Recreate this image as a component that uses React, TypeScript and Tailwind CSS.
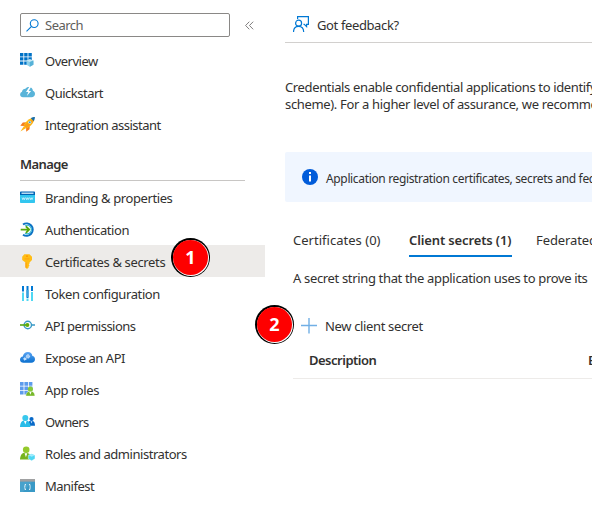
import React from "react";

const icon = "block h-[15px] w-[15px] shrink-0";

const OverviewIcon = () => (
  <svg className={icon} viewBox="0 0 15 15">
    <path fill="#0072c6" d="M0 0h3.400v3.400H0zM4.200 0h3.400v3.400H4.200zM8.400 0h3.400v3.400H8.400zM0 4.200h3.400v3.400H0zM4.200 4.200h3.400v3.400H4.200zM8.400 4.200h3.400v3.400H8.400zM0 8.400h3.400v3.400H0zM4.200 8.400h3.400v3.400H4.200z" />
    <path fill="#8fd0ea" d="M6.500 7.600 9.800 6.200l3.600 1.400v4.200l-3.600 2-3.300-2z" />
    <path fill="#c6e8f5" d="m6.500 7.600 3.300-1.400 3.600 1.400-3.600 1.500z" />
    <path fill="#56b2d8" d="m9.800 9.100 3.600-1.500v4.200l-3.600 2z" />
  </svg>
);
const QuickIcon = () => (
  <svg className={icon} viewBox="0 0 15 15">
    <path fill="#59b4d9" d="M3 12.200A3 3 0 0 1 .1 9.400 2.800 2.800 0 0 1 2 6.800c.2-1.800 1.700-3 3.400-3C6.200 2.600 7.500 2 8.800 2c2.300 0 4 1.700 4.100 3.800 1.300.5 2.100 1.700 2.100 3.100 0 1.900-1.500 3.300-3.400 3.300z" />
    <path fill="#fff" d="M9.200 2 6 7.100h2.300L6.800 11l4.300-5H8.700L11 2z" />
  </svg>
);
const RocketIcon = () => (
  <svg className={icon} viewBox="0 0 15 15">
    <path fill="#f57c1f" d="M6.200 5.200 2.800 5.500.3 8.800l3.500.1zM9.800 8.800l-.3 3.400-3.300 2.500-.1-3.500z" />
    <path fill="#ffb515" d="m4 9-3.600 5.600L6.200 11z" />
    <path fill="#fdb813" d="M3.500 8.400C5.200 5.200 8.200 2 11.600.9l2.500 2.500c-1.100 3.400-4.300 6.400-7.500 8.100z" />
    <path fill="#f78d1e" d="m3.500 8.400 3.100 3.100L14.100 3.400 12.900 2.200z" opacity=".55" />
    <path fill="#176ba5" d="M10.800 1.200C12.400.4 13.500.1 14.900.1c0 1.400-.3 2.500-1.100 4.100z" />
    <circle cx="9.800" cy="5.200" r="1.500" fill="#d6f0f6" />
    <circle cx="9.800" cy="5.200" r=".9" fill="#3c9cba" />
  </svg>
);
const BrandingIcon = () => (
  <svg className={icon} viewBox="0 0 15 15">
    <path fill="#32c6ef" d="M0 4.500h15v7.700a.8.8 0 0 1-.8.8H.8a.8.8 0 0 1-.8-.8z" />
    <path fill="#0064b5" d="M.8 1.500h13.400a.8.8 0 0 1 .8.8V5H0V2.300a.8.8 0 0 1 .8-.8z" />
    <path fill="#e8f8ff" d="M1.500 2.600h12v1.200h-12z" />
    <path fill="none" stroke="#fff" strokeWidth=".6" d="m2 7.500.8 2.200.8-2 .8 2 .8-2.200m.6 0 .8 2.200.8-2 .8 2 .8-2.200m.6 0 .8 2.200.8-2 .8 2 .8-2.200" />
  </svg>
);
const AuthIcon = () => (
  <svg className={icon} viewBox="0 0 15 15">
    <path fill="none" stroke="#0d72c4" strokeWidth="2" d="M3 2.500a6.200 6.200 0 1 1 0 10.200" />
    <path fill="none" stroke="#35b5d4" strokeWidth="1.100" d="M5 4a4.200 4.200 0 1 1 0 7.200" />
    <path fill="none" stroke="#58a60b" strokeWidth="1.800" d="M.7 7.600h8.500M5.900 4.300l3.300 3.300-3.300 3.300" />
  </svg>
);
const KeyIcon = () => (
  <svg className={icon} viewBox="0 0 15 15">
    <path fill="#ffbd16" d="M4.300.3h5.200L12 2.800v3.300L9.500 8.500v1.100l-.8.9.8.9-.9 1 .2.900L7 15l-1.500-1.500v-5L2.200 6.100V2.800z" />
    <path fill="#ff9300" d="M5.500 8.500h.9v5.500l-.9-.5z" />
    <circle cx="7" cy="2.200" r=".9" fill="#ff9300" />
    <path fill="#ffa40c" d="M4.500 4.400h5v1h-5z" />
  </svg>
);
const TokenIcon = () => (
  <svg className={icon} viewBox="0 0 15 15">
    <path fill="#0078d4" d="M2 0h2v5.500H2zM6.500 0h2v12h-2zM11 0h2v5h-2z" />
    <path fill="#50d8f3" d="M2 6.500h2V15H2zM11 6h2v9h-2z" />
    <path fill="#50d8f3" d="M6.500 12.500h2V15h-2z" />
    <path fill="#37a4df" d="M6.500 4h2v7h-2z" />
  </svg>
);
const PermissionIcon = () => (
  <svg className={icon} viewBox="0 0 15 15">
    <path stroke="#3999c6" strokeWidth="1.500" d="M10.500 7H15" />
    <circle cx="7.800" cy="7" r="3.700" fill="white" stroke="#3999c6" strokeWidth="1.400" />
    <path stroke="#59a811" strokeWidth="1.600" d="M0 7h7" />
    <circle cx="7.300" cy="7" r="2.100" fill="#62ac0c" />
  </svg>
);
const ExposeIcon = () => (
  <svg className={icon} viewBox="0 0 15 15">
    <defs><linearGradient id="cloud" x2="0" y2="1"><stop stopColor="#5ba5f4" /><stop offset="1" stopColor="#096fce" /></linearGradient></defs>
    <path fill="url(#cloud)" d="M3.500 12.800C1.500 12.800 0 11.500 0 9.700c0-1.600 1.200-2.900 2.800-3.100C3.200 3.700 5.200 2 7.900 2c2.500 0 4.200 1.600 4.500 4 1.600.2 2.600 1.600 2.600 3.200 0 2-1.500 3.600-3.600 3.600z" />
    <circle cx="4.900" cy="8.900" r="1.200" fill="#b9dbff" stroke="#d9ecff" strokeWidth="1" strokeDasharray="1 .5" />
    <circle cx="7.900" cy="6.400" r="1.700" fill="#a5ccf8" stroke="#d9ecff" strokeWidth="1" strokeDasharray="1 .5" />
  </svg>
);
const RolesIcon = () => (
  <svg className={icon} viewBox="0 0 15 15">
    <path fill="#5d9cec" d="M0 0h3.600v3.700H0zM4.400 0H8v3.700H4.400zM8.800 0h3.600v3.700H8.800zM0 4.500h3.600v3.700H0zM4.400 4.500H8v3.700H4.400zM8.800 4.500h3.600v3.700H8.800zM0 9h3.600v3.500H0zM4.400 9H8v3.500H4.400z" />
    <path fill="#77b82a" stroke="#fff" strokeWidth=".4" d="M5.800 14c.2-3.200 1.400-4.800 4.600-4.800 3 0 4.300 1.600 4.500 4.800z" />
    <circle cx="10.400" cy="7" r="2.600" fill="#86c93b" />
    <path fill="#fff" d="m9.300 9.800 1.100 3 1.100-3z" />
  </svg>
);
const OwnersIcon = () => (
  <svg className={icon} viewBox="0 0 15 15">
    <path fill="#0869c8" d="M7.800 11.800C8 8 8.900 6.800 11.500 6.800c2.400 0 3.300 1.400 3.500 5z" />
    <circle cx="11.500" cy="5" r="2.100" fill="#0869c8" />
    <path fill="#28bce8" d="M0 13c.3-4.700 1.700-6.500 5.200-6.500s5 1.800 5.300 6.500z" />
    <circle cx="5.300" cy="4" r="3" fill="#38c8ed" />
    <path fill="#fff" d="m4 7 1.300 3.600L6.600 7z" /><path fill="#d2eaff" d="m10.600 7.300.9 2.100.9-2.100z" />
  </svg>
);
const AdminIcon = () => (
  <svg className={icon} viewBox="0 0 15 15">
    <path fill="#76b41d" d="M0 13.500C.3 8.700 2 6.800 5.800 6.800c3.500 0 5.200 2 5.500 6.700z" />
    <circle cx="6.200" cy="3.700" r="3.300" fill="#94c92b" />
    <path fill="#fff" d="m4.600 7.300 1.300 4 1.400-4z" />
    <path fill="#50d7f3" stroke="#fff" strokeWidth=".4" d="m8.300 9.200 3.300-1.500L15 9.200v3.600l-3.400 2-3.300-2z" />
    <path fill="#a0edff" d="m8.700 9.300 2.900-1.200 3 1.200-3 1.500z" />
  </svg>
);
const ManifestIcon = () => (
  <svg className={icon} viewBox="0 0 15 15">
    <path fill="#3999c6" d="M0 1h15v13H0z" /><path fill="#a0a1a2" d="M0 1h15v2.700H0z" />
    <path fill="#65b4d8" opacity=".35" d="M0 3.700h12L3 14H0z" />
    <path fill="none" stroke="#fff" strokeWidth=".8" d="M6 6.500H5v1.800l-.7.700.7.700v1.800h1m3-5h1v1.800l.7.700-.7.700v1.800H9" />
  </svg>
);

type Item = { label: string; Icon: () => React.JSX.Element; spacing: string; active?: boolean };
const general: Item[] = [
  { label: "Overview", Icon: OverviewIcon, spacing: "tracking-[-0.5px]" },
  { label: "Quickstart", Icon: QuickIcon, spacing: "tracking-[-0.5px]" },
  { label: "Integration assistant", Icon: RocketIcon, spacing: "tracking-[-0.5px]" },
];
const manage: Item[] = [
  { label: "Branding & properties", Icon: BrandingIcon, spacing: "tracking-[-0.4px]" },
  { label: "Authentication", Icon: AuthIcon, spacing: "tracking-[-0.42px]" },
  { label: "Certificates & secrets", Icon: KeyIcon, spacing: "tracking-[-0.35px]", active: true },
  { label: "Token configuration", Icon: TokenIcon, spacing: "tracking-[-0.38px]" },
  { label: "API permissions", Icon: PermissionIcon, spacing: "tracking-[-0.5px]" },
  { label: "Expose an API", Icon: ExposeIcon, spacing: "tracking-[-0.48px]" },
  { label: "App roles", Icon: RolesIcon, spacing: "tracking-[-0.4px]" },
  { label: "Owners", Icon: OwnersIcon, spacing: "tracking-[-0.6px]" },
  { label: "Roles and administrators", Icon: AdminIcon, spacing: "tracking-[-0.45px]" },
  { label: "Manifest", Icon: ManifestIcon, spacing: "tracking-[-0.5px]" },
];

const NavItem = ({ label, Icon, spacing, active }: Item) => (
  <li className={`relative flex h-8 items-center gap-2.5 pl-5 ${active ? "bg-[#edebe9]" : ""}`}>
    <Icon />
    <span className={`pt-px leading-5 whitespace-nowrap ${spacing}`}>{label}</span>
    {active && <Marker n="1" place="left-[171px] -top-[7px]" />}
  </li>
);

const Marker = ({ n, place }: { n: string; place: string }) => (
  <span className={`absolute flex size-[39px] items-center justify-center rounded-full bg-black p-[1.5px] ${place}`}>
    <span className="flex size-full items-center justify-center rounded-full bg-white p-[0.8px]">
      <span className="flex size-full items-center justify-center rounded-full bg-[#fe0000] text-[18px] font-bold text-white">{n}</span>
    </span>
  </span>
);

export default function App() {
  return (
    <div className="flex h-[510px] w-[592px] overflow-hidden bg-white font-['Noto_Sans',sans-serif] text-[13px] text-[#323130]">
      <aside className="w-[265px] shrink-0 pt-[13px]">
        <div className="ml-5 flex h-6 items-center">
          <div className="flex h-6 w-[210px] items-center gap-[6px] rounded-[2px] border border-[#8a8886] pl-[5px] text-[#605e5c]">
            <svg className="size-[13px]" viewBox="0 0 13 13" fill="none" stroke="#0078d4" strokeWidth="1.100">
              <circle cx="8.200" cy="4.600" r="3.900" /><path d="M5.300 7.600.5 12.400" />
            </svg>
            <span className="pt-px tracking-[-0.5px]">Search</span>
          </div>
          <svg className="ml-[15px] size-[9px]" viewBox="0 0 9 9" fill="none" stroke="#737170" strokeWidth=".9">
            <path d="M4.300.7.6 4.500l3.700 3.800M8.200.7 4.500 4.500l3.700 3.800" />
          </svg>
        </div>
        <ul className="mt-[7px]">{general.map((i) => <NavItem key={i.label} {...i} />)}</ul>
        <h2 className="mr-5 ml-5 h-[41px] border-b border-[#c8c6c4] pt-[14px] leading-5 font-semibold tracking-[-0.6px]">Manage</h2>
        <ul>{manage.map((i) => <NavItem key={i.label} {...i} />)}</ul>
      </aside>

      <main className="ml-5 w-[307px] shrink-0 whitespace-nowrap">
        <div className="flex h-[43px] items-center gap-2 border-b border-[#d2d0ce] pt-[7px] pl-2">
          <svg className="mb-[2px] size-4" viewBox="0 0 16 16" fill="none" stroke="#0078d4" strokeWidth="1.200">
            <path d="M4.600 3V.6h10.800v7.800h-1.800v2.200l-2.300-2.200h-.8" /><circle cx="5.600" cy="7.200" r="3" /><path d="M.5 16c.1-3.500 2-5.700 5.100-5.700s5 2.200 5.100 5.700" />
          </svg>
          <span className="pt-[2px] tracking-[-0.38px]">Got feedback?</span>
        </div>
        <p className="mt-[36px] leading-[17px]">
          <span className="tracking-[-0.36px]">Credentials enable confidential applications to identify</span><br />
          <span className="tracking-[-0.34px]">scheme). For a higher level of assurance, we recommend</span>
        </p>
        <div className="mt-[39px] flex h-[50px] items-center gap-2 rounded-l-[2px] bg-[#f0f6ff] pl-[17px]">
          <svg className="size-4 shrink-0" viewBox="0 0 16 16"><circle cx="8" cy="8" r="8" fill="#015cda" /><path fill="#fff" d="M7 6.500h2v6H7zM7 3h2v2H7z" /></svg>
          <span className="pt-[3px] text-[12px] tracking-[-0.35px]">Application registration certificates, secrets and fede</span>
        </div>
        <nav className="mt-[24px] ml-2 flex h-[31px] leading-7">
          <span className="w-[116px] shrink-0 tracking-[0.02px]">Certificates (0)</span>
          <span className="mr-[25px] w-[103px] shrink-0 border-b-2 border-[#0078d4] font-semibold tracking-[-0.13px]">Client secrets (1)</span>
          <span className="-ml-px tracking-[-0.1px]">Federated</span>
        </nav>
        <p className="mt-[11px] ml-2 leading-5 tracking-[-0.34px]">A secret string that the application uses to prove its</p>
        <div className="relative mt-[28px] ml-4 flex h-5 items-center gap-2">
          <Marker n="2" place="-left-[46px] -top-[11px]" />
          <svg className="size-4" viewBox="0 0 16 16" stroke="#71afe5" strokeWidth="1.400"><path d="M8 0v15.500M0 7.500h16" /></svg>
          <span className="pt-px tracking-[-0.35px]">New client secret</span>
        </div>
        <div className="mt-[14px] ml-2 flex h-[29px] border-b border-[#edebe9] pl-4 leading-5 font-semibold">
          <span className="w-[279px] shrink-0 tracking-[-0.5px]">Description</span><span>E</span>
        </div>
      </main>
    </div>
  );
}
